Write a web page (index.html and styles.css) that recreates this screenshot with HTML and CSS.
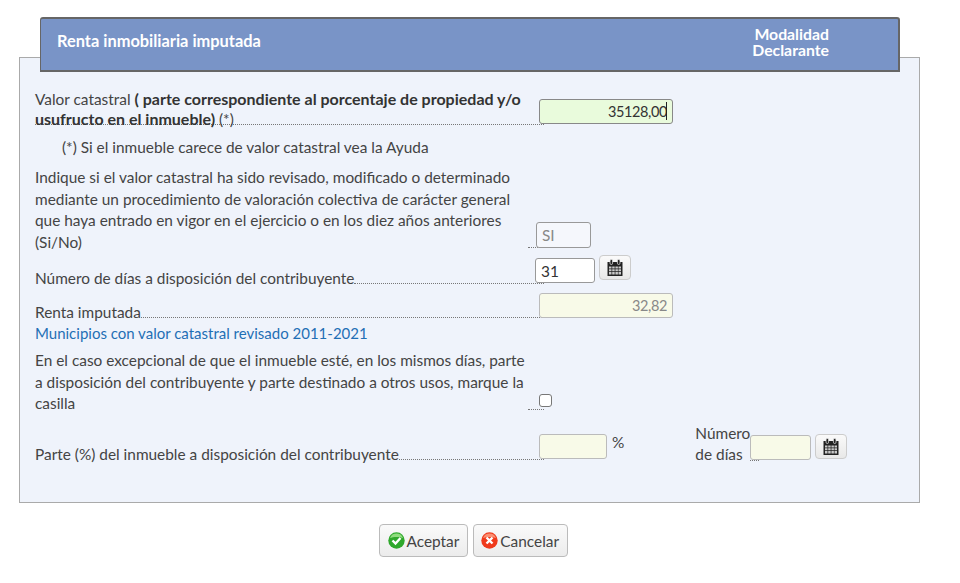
FILE: index.html
```html
<!DOCTYPE html>
<html lang="en">

<head>
    <meta charset="UTF-8">
    <title>Renta inmobiliaria imputada</title>
    <link rel="stylesheet" href="styles.css">
</head>

<body>
    <div class="header">
        <div class="header-title">Renta inmobiliaria imputada</div>
        <div class="header-mode">Modalidad<br>Declarante</div>
    </div>

    <div class="panel">
        <div class="row row-valor">
            <div class="label label-full">Valor catastral <b>( parte correspondiente al porcentaje de propiedad y/o<br>usufructo en el inmueble)</b> (*)</div>
            <div class="field-wrap">
                <input class="field field-green" type="text" value="35128,00">
                <span class="caret"></span>
            </div>
        </div>
        <p class="note">(*) Si el inmueble carece de valor catastral vea la Ayuda</p>

        <div class="row row-revisado">
            <div class="label">
                <div class="text text-wide">Indique si el valor catastral ha sido revisado, modificado o determinado<br>mediante un procedimiento de valoración colectiva de carácter general<br>que haya entrado en vigor en el ejercicio o en los diez años anteriores<br>(Si/No)</div>
                <span class="leader"></span>
            </div>
            <input class="field field-si" type="text" value="SI">
        </div>

        <div class="row row-dias">
            <div class="label">
                <div class="text">Número de días a disposición del contribuyente</div>
                <span class="leader"></span>
            </div>
            <input class="field field-dias" type="text" value="31">
            <button class="cal-btn">
                <svg width="16" height="17" viewBox="0 0 16 17">
                    <path d="M.5 3h15v14H.5z" fill="#222"/>
                    <path d="M2 7.500h2.500v2H2zM5.200 7.500h2.500v2H5.200zM8.400 7.500h2.500v2H8.400zM11.500 7.500H14v2h-2.500zM2 10.200h2.500v2H2zM5.200 10.200h2.500v2H5.200zM8.400 10.200h2.500v2H8.400zM11.500 10.200H14v2h-2.500zM2 12.900h2.500v2.600H2zM5.200 12.900h2.500v2.600H5.200zM8.400 12.900h2.500v2.600H8.400zM11.500 12.900H14v2.600h-2.500z" fill="#c9c9c9"/>
                    <rect x="3" y=".5" width="2.600" height="5" rx="1.300" fill="#222" stroke="#eee" stroke-width=".7"/>
                    <rect x="10.400" y=".5" width="2.600" height="5" rx="1.300" fill="#222" stroke="#eee" stroke-width=".7"/>
                </svg>
            </button>
        </div>

        <div class="row row-renta">
            <div class="label">
                <div class="text">Renta imputada</div>
                <span class="leader"></span>
            </div>
            <input class="field field-cream field-renta" type="text" value="32,82">
        </div>
        <a class="link" href="#">Municipios con valor catastral revisado 2011-2021</a>

        <div class="row row-casilla">
            <div class="label">
                <div class="text text-wide">En el caso excepcional de que el inmueble esté, en los mismos días, parte<br>a disposición del contribuyente y parte destinado a otros usos, marque la<br>casilla</div>
                <span class="leader"></span>
            </div>
            <span class="check"></span>
        </div>

        <div class="row row-parte">
            <div class="label">
                <div class="text">Parte (%) del inmueble a disposición del contribuyente</div>
                <span class="leader"></span>
            </div>
            <input class="field field-cream field-parte" type="text">
            <span class="percent">%</span>
            <div class="num-label">Número<br>de días</div>
            <span class="short-leader"></span>
            <input class="field field-cream field-num" type="text">
            <button class="cal-btn cal-btn-last">
                <svg width="16" height="17" viewBox="0 0 16 17">
                    <path d="M.5 3h15v14H.5z" fill="#222"/>
                    <path d="M2 7.500h2.500v2H2zM5.200 7.500h2.500v2H5.200zM8.400 7.500h2.500v2H8.400zM11.500 7.500H14v2h-2.500zM2 10.200h2.500v2H2zM5.200 10.200h2.500v2H5.200zM8.400 10.200h2.500v2H8.400zM11.500 10.200H14v2h-2.500zM2 12.900h2.500v2.600H2zM5.200 12.900h2.500v2.600H5.200zM8.400 12.900h2.500v2.600H8.400zM11.500 12.900H14v2.600h-2.500z" fill="#c9c9c9"/>
                    <rect x="3" y=".5" width="2.600" height="5" rx="1.300" fill="#222" stroke="#eee" stroke-width=".7"/>
                    <rect x="10.400" y=".5" width="2.600" height="5" rx="1.300" fill="#222" stroke="#eee" stroke-width=".7"/>
                </svg>
            </button>
        </div>
    </div>

    <div class="actions">
        <button class="btn">
            <svg width="17" height="17" viewBox="0 0 17 17">
                <circle cx="8.500" cy="8.500" r="8.200" fill="#2fa82c"/>
                <path d="M2 6a7 7 0 0 1 13 0c-3-1.500-10-1.500-13 0z" fill="#8fdc7e"/>
                <path d="M4.500 8.500l3 3 5-5.500" fill="none" stroke="#fff" stroke-width="2.400"/>
            </svg>
            Aceptar
        </button>
        <button class="btn">
            <svg width="17" height="17" viewBox="0 0 17 17">
                <circle cx="8.500" cy="8.500" r="8.200" fill="#ef3a1c"/>
                <path d="M2 6a7 7 0 0 1 13 0c-3-1.500-10-1.500-13 0z" fill="#fb8f72"/>
                <path d="M5.500 5.500l6 6M11.500 5.500l-6 6" fill="none" stroke="#fff" stroke-width="2.400"/>
            </svg>
            Cancelar
        </button>
    </div>
</body>

</html>
```

FILE: styles.css
```css
body {
    margin: 0;
    background-color: #fff;
    font-family: "Lato", "Open Sans", sans-serif;
    font-size: 15.400px;
    line-height: 21.400px;
    color: #444;
}

.header {
    position: relative;
    box-sizing: border-box;
    width: 860px;
    height: 55px;
    margin: 17px 0 0 40px;
    padding: 0 0 6px 16px;
    display: flex;
    align-items: center;
    background-color: #7994c7;
    border: 1px solid #666;
    border-width: 2px 2px 2px 1px;
    border-radius: 3px 3px 0 0;
    color: #fff;
    font-weight: bold;
    font-size: 16.400px;
}

.header-title {
    flex: 1;
    margin-bottom: 2px;
}

.header-mode {
    margin-right: 69px;
    text-align: right;
    font-size: 15.800px;
    line-height: 16px;
}

.panel {
    box-sizing: border-box;
    width: 901px;
    height: 446px;
    margin: -15px 0 0 19px;
    padding: 31px 0 0 15px;
    background-color: #eff3fb;
    border: 1px solid #aaa;
}

.row {
    display: flex;
    align-items: flex-end;
}

.label {
    width: 509px;
    display: flex;
    align-items: flex-end;
    flex-shrink: 0;
}

.label-full {
    display: block;
    box-sizing: border-box;
    border-bottom: 1px dotted #777;
    line-height: 19px;
    height: 36px;
    white-space: nowrap;
}

.label b {
    color: #333;
    font-size: 16px;
}

.text {
    flex-shrink: 0;
    white-space: nowrap;
}

.text-wide {
    width: 493px;
}

.leader {
    flex: 1;
    margin-bottom: 5px;
    border-bottom: 1px dotted #777;
}

.note {
    margin: 12px 0 0 27px;
}

.field {
    box-sizing: border-box;
    height: 25px;
    padding: 0 5px;
    font-family: inherit;
    font-size: 15.400px;
    color: #333;
    background-color: #fff;
    border: 1.500px solid #999;
    border-radius: 3px;
    outline: none;
}

.field-wrap {
    position: relative;
    margin: 10px 0 0 -5px;
}

.field-green {
    display: block;
    width: 134px;
    text-align: right;
    font-size: 14.500px;
    letter-spacing: -0.4px;
    background-color: #e9fbdc;
    border-color: #888;
}

.caret {
    position: absolute;
    top: 3px;
    right: 6px;
    height: 18px;
    border-left: 1px solid #222;
}

.field-cream {
    background-color: #f8fae8;
    border-color: #bbb;
}

.field-si {
    width: 55px;
    height: 26px;
    margin: 0 0 5px -8px;
    color: #888;
    background-color: #f5f7fc;
}

.field-dias {
    width: 60px;
    margin: 0 0 6px -9px;
}

.field-renta {
    width: 134px;
    margin: 0 0 5px -5px;
    text-align: right;
    font-size: 14.500px;
    letter-spacing: -0.4px;
    color: #888;
}

.field-parte {
    width: 68px;
    margin: 0 0 6px -5px;
}

.field-num {
    width: 61px;
    margin-bottom: 5px;
}

.cal-btn {
    box-sizing: border-box;
    width: 32px;
    height: 25px;
    margin: 0 0 9px 4px;
    padding: 0;
    display: flex;
    align-items: center;
    justify-content: center;
    background: linear-gradient(#fafafa, #e8e8e8);
    border: 1px solid #ccc;
    border-radius: 4px;
}

.cal-btn-last {
    margin-bottom: 6px;
}

.row-valor {
    align-items: flex-start;
}

.row-revisado {
    margin-top: 9px;
}

.row-dias {
    margin-top: 2px;
}

.row-renta {
    margin-top: 4px;
}

.link {
    display: block;
    font-size: 15px;
    color: #1f6fb5;
    text-decoration: none;
}

.row-casilla {
    margin-top: 6px;
}

.check {
    box-sizing: border-box;
    width: 13px;
    height: 13px;
    margin: 0 0 8px -5px;
    background-color: #fff;
    border: 1.500px solid #777;
    border-radius: 3px;
}

.row-parte {
    margin-top: 8px;
}

.percent {
    margin: 9px 0 0 5px;
    align-self: flex-start;
}

.num-label {
    margin-left: 71px;
    width: 55px;
}

.short-leader {
    width: 9px;
    margin: 0 -9px 4px 0;
    border-bottom: 1px dotted #777;
}

.actions {
    display: flex;
    margin: 21px 0 0 379px;
    gap: 5px;
}

.btn {
    height: 33px;
    padding: 0 7.500px;
    display: flex;
    align-items: center;
    gap: 2px;
    font-family: inherit;
    font-size: 15.400px;
    color: #444;
    background: linear-gradient(#fafafa, #ececec);
    border: 1px solid #bbb;
    border-radius: 4px;
}
```
